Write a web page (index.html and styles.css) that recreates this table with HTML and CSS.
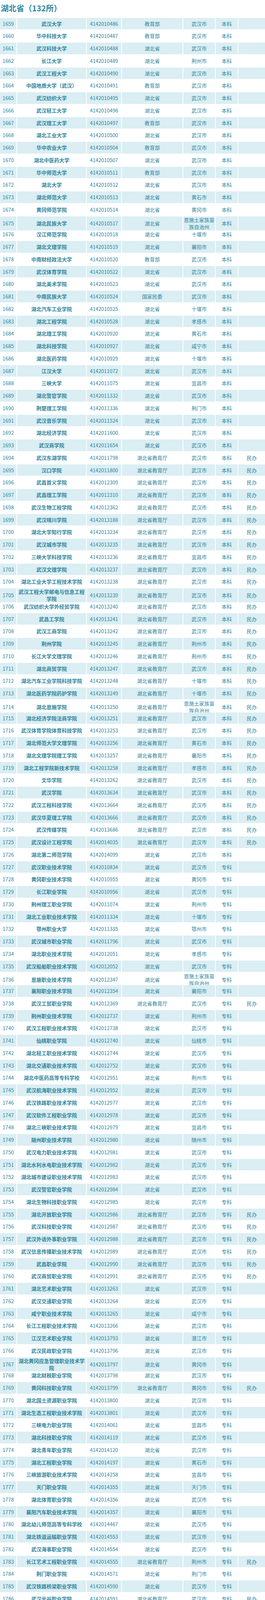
FILE: index.html
```html
<!DOCTYPE html>
<html lang="zh-CN">
<head>
<meta charset="utf-8">
<title>湖北省（132所）</title>
<link rel="stylesheet" href="styles.css">
</head>
<body>
<h1 class="title">湖北省（132所）</h1>
<div class="table">
<div class="row"><span class="c">1659</span><b class="c n">武汉大学</b><span class="c">4142010486</span><span class="c">教育部</span><span class="c">武汉市</span><span class="c">本科</span><span class="c"></span></div>
<div class="row"><span class="c">1660</span><b class="c n">华中科技大学</b><span class="c">4142010487</span><span class="c">教育部</span><span class="c">武汉市</span><span class="c">本科</span><span class="c"></span></div>
<div class="row"><span class="c">1661</span><b class="c n">武汉科技大学</b><span class="c">4142010488</span><span class="c">湖北省</span><span class="c">武汉市</span><span class="c">本科</span><span class="c"></span></div>
<div class="row"><span class="c">1662</span><b class="c n">长江大学</b><span class="c">4142010489</span><span class="c">湖北省</span><span class="c">荆州市</span><span class="c">本科</span><span class="c"></span></div>
<div class="row"><span class="c">1663</span><b class="c n">武汉工程大学</b><span class="c">4142010490</span><span class="c">湖北省</span><span class="c">武汉市</span><span class="c">本科</span><span class="c"></span></div>
<div class="row"><span class="c">1664</span><b class="c n">中国地质大学（武汉）</b><span class="c">4142010491</span><span class="c">教育部</span><span class="c">武汉市</span><span class="c">本科</span><span class="c"></span></div>
<div class="row"><span class="c">1665</span><b class="c n">武汉纺织大学</b><span class="c">4142010495</span><span class="c">湖北省</span><span class="c">武汉市</span><span class="c">本科</span><span class="c"></span></div>
<div class="row"><span class="c">1666</span><b class="c n">武汉轻工大学</b><span class="c">4142010496</span><span class="c">湖北省</span><span class="c">武汉市</span><span class="c">本科</span><span class="c"></span></div>
<div class="row"><span class="c">1667</span><b class="c n">武汉理工大学</b><span class="c">4142010497</span><span class="c">教育部</span><span class="c">武汉市</span><span class="c">本科</span><span class="c"></span></div>
<div class="row"><span class="c">1668</span><b class="c n">湖北工业大学</b><span class="c">4142010500</span><span class="c">湖北省</span><span class="c">武汉市</span><span class="c">本科</span><span class="c"></span></div>
<div class="row"><span class="c">1669</span><b class="c n">华中农业大学</b><span class="c">4142010504</span><span class="c">教育部</span><span class="c">武汉市</span><span class="c">本科</span><span class="c"></span></div>
<div class="row"><span class="c">1670</span><b class="c n">湖北中医药大学</b><span class="c">4142010507</span><span class="c">湖北省</span><span class="c">武汉市</span><span class="c">本科</span><span class="c"></span></div>
<div class="row"><span class="c">1671</span><b class="c n">华中师范大学</b><span class="c">4142010511</span><span class="c">教育部</span><span class="c">武汉市</span><span class="c">本科</span><span class="c"></span></div>
<div class="row"><span class="c">1672</span><b class="c n">湖北大学</b><span class="c">4142010512</span><span class="c">湖北省</span><span class="c">武汉市</span><span class="c">本科</span><span class="c"></span></div>
<div class="row"><span class="c">1673</span><b class="c n">湖北师范大学</b><span class="c">4142010513</span><span class="c">湖北省</span><span class="c">黄石市</span><span class="c">本科</span><span class="c"></span></div>
<div class="row"><span class="c">1674</span><b class="c n">黄冈师范学院</b><span class="c">4142010514</span><span class="c">湖北省</span><span class="c">黄冈市</span><span class="c">本科</span><span class="c"></span></div>
<div class="row"><span class="c">1675</span><b class="c n">湖北民族大学</b><span class="c">4142010517</span><span class="c">湖北省</span><span class="c">恩施土家族苗族自治州</span><span class="c">本科</span><span class="c"></span></div>
<div class="row"><span class="c">1676</span><b class="c n">汉江师范学院</b><span class="c">4142010518</span><span class="c">湖北省</span><span class="c">十堰市</span><span class="c">本科</span><span class="c"></span></div>
<div class="row"><span class="c">1677</span><b class="c n">湖北文理学院</b><span class="c">4142010519</span><span class="c">湖北省</span><span class="c">襄阳市</span><span class="c">本科</span><span class="c"></span></div>
<div class="row"><span class="c">1678</span><b class="c n">中南财经政法大学</b><span class="c">4142010520</span><span class="c">教育部</span><span class="c">武汉市</span><span class="c">本科</span><span class="c"></span></div>
<div class="row"><span class="c">1679</span><b class="c n">武汉体育学院</b><span class="c">4142010522</span><span class="c">湖北省</span><span class="c">武汉市</span><span class="c">本科</span><span class="c"></span></div>
<div class="row"><span class="c">1680</span><b class="c n">湖北美术学院</b><span class="c">4142010523</span><span class="c">湖北省</span><span class="c">武汉市</span><span class="c">本科</span><span class="c"></span></div>
<div class="row"><span class="c">1681</span><b class="c n">中南民族大学</b><span class="c">4142010524</span><span class="c">国家民委</span><span class="c">武汉市</span><span class="c">本科</span><span class="c"></span></div>
<div class="row"><span class="c">1682</span><b class="c n">湖北汽车工业学院</b><span class="c">4142010525</span><span class="c">湖北省</span><span class="c">十堰市</span><span class="c">本科</span><span class="c"></span></div>
<div class="row"><span class="c">1683</span><b class="c n">湖北工程学院</b><span class="c">4142010528</span><span class="c">湖北省</span><span class="c">孝感市</span><span class="c">本科</span><span class="c"></span></div>
<div class="row"><span class="c">1684</span><b class="c n">湖北理工学院</b><span class="c">4142010920</span><span class="c">湖北省</span><span class="c">黄石市</span><span class="c">本科</span><span class="c"></span></div>
<div class="row"><span class="c">1685</span><b class="c n">湖北科技学院</b><span class="c">4142010927</span><span class="c">湖北省</span><span class="c">咸宁市</span><span class="c">本科</span><span class="c"></span></div>
<div class="row"><span class="c">1686</span><b class="c n">湖北医药学院</b><span class="c">4142010929</span><span class="c">湖北省</span><span class="c">十堰市</span><span class="c">本科</span><span class="c"></span></div>
<div class="row"><span class="c">1687</span><b class="c n">江汉大学</b><span class="c">4142011072</span><span class="c">湖北省</span><span class="c">武汉市</span><span class="c">本科</span><span class="c"></span></div>
<div class="row"><span class="c">1688</span><b class="c n">三峡大学</b><span class="c">4142011075</span><span class="c">湖北省</span><span class="c">宜昌市</span><span class="c">本科</span><span class="c"></span></div>
<div class="row"><span class="c">1689</span><b class="c n">湖北警官学院</b><span class="c">4142011332</span><span class="c">湖北省</span><span class="c">武汉市</span><span class="c">本科</span><span class="c"></span></div>
<div class="row"><span class="c">1690</span><b class="c n">荆楚理工学院</b><span class="c">4142011336</span><span class="c">湖北省</span><span class="c">荆门市</span><span class="c">本科</span><span class="c"></span></div>
<div class="row"><span class="c">1691</span><b class="c n">武汉音乐学院</b><span class="c">4142011524</span><span class="c">湖北省</span><span class="c">武汉市</span><span class="c">本科</span><span class="c"></span></div>
<div class="row"><span class="c">1692</span><b class="c n">湖北经济学院</b><span class="c">4142011600</span><span class="c">湖北省</span><span class="c">武汉市</span><span class="c">本科</span><span class="c"></span></div>
<div class="row"><span class="c">1693</span><b class="c n">武汉商学院</b><span class="c">4142011654</span><span class="c">湖北省</span><span class="c">武汉市</span><span class="c">本科</span><span class="c"></span></div>
<div class="row"><span class="c">1694</span><b class="c n">武汉东湖学院</b><span class="c">4142011798</span><span class="c">湖北省教育厅</span><span class="c">武汉市</span><span class="c">本科</span><span class="c">民办</span></div>
<div class="row"><span class="c">1695</span><b class="c n">汉口学院</b><span class="c">4142011800</span><span class="c">湖北省教育厅</span><span class="c">武汉市</span><span class="c">本科</span><span class="c">民办</span></div>
<div class="row"><span class="c">1696</span><b class="c n">武昌首义学院</b><span class="c">4142012309</span><span class="c">湖北省教育厅</span><span class="c">武汉市</span><span class="c">本科</span><span class="c">民办</span></div>
<div class="row"><span class="c">1697</span><b class="c n">武昌理工学院</b><span class="c">4142012310</span><span class="c">湖北省教育厅</span><span class="c">武汉市</span><span class="c">本科</span><span class="c">民办</span></div>
<div class="row"><span class="c">1698</span><b class="c n">武汉生物工程学院</b><span class="c">4142012362</span><span class="c">湖北省教育厅</span><span class="c">武汉市</span><span class="c">本科</span><span class="c">民办</span></div>
<div class="row"><span class="c">1699</span><b class="c n">武汉晴川学院</b><span class="c">4142013188</span><span class="c">湖北省教育厅</span><span class="c">武汉市</span><span class="c">本科</span><span class="c">民办</span></div>
<div class="row"><span class="c">1700</span><b class="c n">湖北大学知行学院</b><span class="c">4142013234</span><span class="c">湖北省教育厅</span><span class="c">武汉市</span><span class="c">本科</span><span class="c">民办</span></div>
<div class="row"><span class="c">1701</span><b class="c n">武汉城市学院</b><span class="c">4142013235</span><span class="c">湖北省教育厅</span><span class="c">武汉市</span><span class="c">本科</span><span class="c">民办</span></div>
<div class="row"><span class="c">1702</span><b class="c n">三峡大学科技学院</b><span class="c">4142013236</span><span class="c">湖北省教育厅</span><span class="c">宜昌市</span><span class="c">本科</span><span class="c">民办</span></div>
<div class="row"><span class="c">1703</span><b class="c n">武汉文理学院</b><span class="c">4142013237</span><span class="c">湖北省教育厅</span><span class="c">武汉市</span><span class="c">本科</span><span class="c">民办</span></div>
<div class="row"><span class="c">1704</span><b class="c n">湖北工业大学工程技术学院</b><span class="c">4142013238</span><span class="c">湖北省教育厅</span><span class="c">武汉市</span><span class="c">本科</span><span class="c">民办</span></div>
<div class="row"><span class="c">1705</span><b class="c n">武汉工程大学邮电与信息工程学院</b><span class="c">4142013239</span><span class="c">湖北省教育厅</span><span class="c">武汉市</span><span class="c">本科</span><span class="c">民办</span></div>
<div class="row"><span class="c">1706</span><b class="c n">武汉纺织大学外经贸学院</b><span class="c">4142013240</span><span class="c">湖北省教育厅</span><span class="c">武汉市</span><span class="c">本科</span><span class="c">民办</span></div>
<div class="row"><span class="c">1707</span><b class="c n">武昌工学院</b><span class="c">4142013241</span><span class="c">湖北省教育厅</span><span class="c">武汉市</span><span class="c">本科</span><span class="c">民办</span></div>
<div class="row"><span class="c">1708</span><b class="c n">武汉工商学院</b><span class="c">4142013242</span><span class="c">湖北省教育厅</span><span class="c">武汉市</span><span class="c">本科</span><span class="c">民办</span></div>
<div class="row"><span class="c">1709</span><b class="c n">荆州学院</b><span class="c">4142013245</span><span class="c">湖北省教育厅</span><span class="c">荆州市</span><span class="c">本科</span><span class="c">民办</span></div>
<div class="row"><span class="c">1710</span><b class="c n">长江大学文理学院</b><span class="c">4142013246</span><span class="c">湖北省教育厅</span><span class="c">荆州市</span><span class="c">本科</span><span class="c">民办</span></div>
<div class="row"><span class="c">1711</span><b class="c n">湖北商贸学院</b><span class="c">4142013247</span><span class="c">湖北省教育厅</span><span class="c">武汉市</span><span class="c">本科</span><span class="c">民办</span></div>
<div class="row"><span class="c">1712</span><b class="c n">湖北汽车工业学院科技学院</b><span class="c">4142013248</span><span class="c">湖北省教育厅</span><span class="c">十堰市</span><span class="c">本科</span><span class="c">民办</span></div>
<div class="row"><span class="c">1713</span><b class="c n">湖北医药学院药护学院</b><span class="c">4142013249</span><span class="c">湖北省教育厅</span><span class="c">十堰市</span><span class="c">本科</span><span class="c">民办</span></div>
<div class="row"><span class="c">1714</span><b class="c n">湖北恩施学院</b><span class="c">4142013250</span><span class="c">湖北省教育厅</span><span class="c">恩施土家族苗族自治州</span><span class="c">本科</span><span class="c">民办</span></div>
<div class="row"><span class="c">1715</span><b class="c n">湖北经济学院法商学院</b><span class="c">4142013251</span><span class="c">湖北省教育厅</span><span class="c">武汉市</span><span class="c">本科</span><span class="c">民办</span></div>
<div class="row"><span class="c">1716</span><b class="c n">武汉体育学院体育科技学院</b><span class="c">4142013253</span><span class="c">湖北省教育厅</span><span class="c">武汉市</span><span class="c">本科</span><span class="c">民办</span></div>
<div class="row"><span class="c">1717</span><b class="c n">湖北师范大学文理学院</b><span class="c">4142013256</span><span class="c">湖北省教育厅</span><span class="c">黄石市</span><span class="c">本科</span><span class="c">民办</span></div>
<div class="row"><span class="c">1718</span><b class="c n">湖北文理学院理工学院</b><span class="c">4142013257</span><span class="c">湖北省教育厅</span><span class="c">襄阳市</span><span class="c">本科</span><span class="c">民办</span></div>
<div class="row"><span class="c">1719</span><b class="c n">湖北工程学院新技术学院</b><span class="c">4142013258</span><span class="c">湖北省教育厅</span><span class="c">孝感市</span><span class="c">本科</span><span class="c">民办</span></div>
<div class="row"><span class="c">1720</span><b class="c n">文华学院</b><span class="c">4142013262</span><span class="c">湖北省教育厅</span><span class="c">武汉市</span><span class="c">本科</span><span class="c">民办</span></div>
<div class="row"><span class="c">1721</span><b class="c n">武汉学院</b><span class="c">4142013634</span><span class="c">湖北省教育厅</span><span class="c">武汉市</span><span class="c">本科</span><span class="c">民办</span></div>
<div class="row"><span class="c">1722</span><b class="c n">武汉工程科技学院</b><span class="c">4142013664</span><span class="c">湖北省教育厅</span><span class="c">武汉市</span><span class="c">本科</span><span class="c">民办</span></div>
<div class="row"><span class="c">1723</span><b class="c n">武汉华夏理工学院</b><span class="c">4142013666</span><span class="c">湖北省教育厅</span><span class="c">武汉市</span><span class="c">本科</span><span class="c">民办</span></div>
<div class="row"><span class="c">1724</span><b class="c n">武汉传媒学院</b><span class="c">4142013686</span><span class="c">湖北省教育厅</span><span class="c">武汉市</span><span class="c">本科</span><span class="c">民办</span></div>
<div class="row"><span class="c">1725</span><b class="c n">武汉设计工程学院</b><span class="c">4142014035</span><span class="c">湖北省教育厅</span><span class="c">武汉市</span><span class="c">本科</span><span class="c">民办</span></div>
<div class="row"><span class="c">1726</span><b class="c n">湖北第二师范学院</b><span class="c">4142014099</span><span class="c">湖北省</span><span class="c">武汉市</span><span class="c">本科</span><span class="c"></span></div>
<div class="row"><span class="c">1727</span><b class="c n">武汉职业技术学院</b><span class="c">4142010834</span><span class="c">湖北省</span><span class="c">武汉市</span><span class="c">专科</span><span class="c"></span></div>
<div class="row"><span class="c">1728</span><b class="c n">黄冈职业技术学院</b><span class="c">4142010955</span><span class="c">湖北省</span><span class="c">黄冈市</span><span class="c">专科</span><span class="c"></span></div>
<div class="row"><span class="c">1729</span><b class="c n">长江职业学院</b><span class="c">4142010956</span><span class="c">湖北省</span><span class="c">武汉市</span><span class="c">专科</span><span class="c"></span></div>
<div class="row"><span class="c">1730</span><b class="c n">荆州理工职业学院</b><span class="c">4142011074</span><span class="c">湖北省</span><span class="c">荆州市</span><span class="c">专科</span><span class="c"></span></div>
<div class="row"><span class="c">1731</span><b class="c n">湖北工业职业技术学院</b><span class="c">4142011334</span><span class="c">湖北省</span><span class="c">十堰市</span><span class="c">专科</span><span class="c"></span></div>
<div class="row"><span class="c">1732</span><b class="c n">鄂州职业大学</b><span class="c">4142011335</span><span class="c">湖北省</span><span class="c">鄂州市</span><span class="c">专科</span><span class="c"></span></div>
<div class="row"><span class="c">1733</span><b class="c n">武汉城市职业学院</b><span class="c">4142011796</span><span class="c">湖北省</span><span class="c">武汉市</span><span class="c">专科</span><span class="c"></span></div>
<div class="row"><span class="c">1734</span><b class="c n">湖北职业技术学院</b><span class="c">4142012051</span><span class="c">湖北省</span><span class="c">孝感市</span><span class="c">专科</span><span class="c"></span></div>
<div class="row"><span class="c">1735</span><b class="c n">武汉船舶职业技术学院</b><span class="c">4142012052</span><span class="c">湖北省</span><span class="c">武汉市</span><span class="c">专科</span><span class="c"></span></div>
<div class="row"><span class="c">1736</span><b class="c n">恩施职业技术学院</b><span class="c">4142012347</span><span class="c">湖北省</span><span class="c">恩施土家族苗族自治州</span><span class="c">专科</span><span class="c"></span></div>
<div class="row"><span class="c">1737</span><b class="c n">襄阳职业技术学院</b><span class="c">4142012354</span><span class="c">湖北省</span><span class="c">襄阳市</span><span class="c">专科</span><span class="c"></span></div>
<div class="row"><span class="c">1738</span><b class="c n">武汉工贸职业学院</b><span class="c">4142012369</span><span class="c">湖北省教育厅</span><span class="c">武汉市</span><span class="c">专科</span><span class="c">民办</span></div>
<div class="row"><span class="c">1739</span><b class="c n">荆州职业技术学院</b><span class="c">4142012737</span><span class="c">湖北省</span><span class="c">荆州市</span><span class="c">专科</span><span class="c"></span></div>
<div class="row"><span class="c">1740</span><b class="c n">武汉工程职业技术学院</b><span class="c">4142012738</span><span class="c">湖北省</span><span class="c">武汉市</span><span class="c">专科</span><span class="c"></span></div>
<div class="row"><span class="c">1741</span><b class="c n">仙桃职业学院</b><span class="c">4142012740</span><span class="c">湖北省</span><span class="c">仙桃市</span><span class="c">专科</span><span class="c"></span></div>
<div class="row"><span class="c">1742</span><b class="c n">湖北轻工职业技术学院</b><span class="c">4142012744</span><span class="c">湖北省</span><span class="c">武汉市</span><span class="c">专科</span><span class="c"></span></div>
<div class="row"><span class="c">1743</span><b class="c n">湖北交通职业技术学院</b><span class="c">4142012752</span><span class="c">湖北省</span><span class="c">武汉市</span><span class="c">专科</span><span class="c"></span></div>
<div class="row"><span class="c">1744</span><b class="c n">湖北中医药高等专科学校</b><span class="c">4142012951</span><span class="c">湖北省</span><span class="c">荆州市</span><span class="c">专科</span><span class="c"></span></div>
<div class="row"><span class="c">1745</span><b class="c n">武汉航海职业技术学院</b><span class="c">4142012952</span><span class="c">湖北省</span><span class="c">武汉市</span><span class="c">专科</span><span class="c"></span></div>
<div class="row"><span class="c">1746</span><b class="c n">武汉铁路职业技术学院</b><span class="c">4142012977</span><span class="c">湖北省</span><span class="c">武汉市</span><span class="c">专科</span><span class="c"></span></div>
<div class="row"><span class="c">1747</span><b class="c n">武汉软件工程职业学院</b><span class="c">4142012978</span><span class="c">湖北省</span><span class="c">武汉市</span><span class="c">专科</span><span class="c"></span></div>
<div class="row"><span class="c">1748</span><b class="c n">湖北三峡职业技术学院</b><span class="c">4142012979</span><span class="c">湖北省</span><span class="c">宜昌市</span><span class="c">专科</span><span class="c"></span></div>
<div class="row"><span class="c">1749</span><b class="c n">随州职业技术学院</b><span class="c">4142012980</span><span class="c">湖北省</span><span class="c">随州市</span><span class="c">专科</span><span class="c"></span></div>
<div class="row"><span class="c">1750</span><b class="c n">武汉电力职业技术学院</b><span class="c">4142012981</span><span class="c">湖北省</span><span class="c">武汉市</span><span class="c">专科</span><span class="c"></span></div>
<div class="row"><span class="c">1751</span><b class="c n">湖北水利水电职业技术学院</b><span class="c">4142012982</span><span class="c">湖北省</span><span class="c">武汉市</span><span class="c">专科</span><span class="c"></span></div>
<div class="row"><span class="c">1752</span><b class="c n">湖北城市建设职业技术学院</b><span class="c">4142012983</span><span class="c">湖北省</span><span class="c">武汉市</span><span class="c">专科</span><span class="c"></span></div>
<div class="row"><span class="c">1753</span><b class="c n">武汉警官职业学院</b><span class="c">4142012984</span><span class="c">湖北省</span><span class="c">武汉市</span><span class="c">专科</span><span class="c"></span></div>
<div class="row"><span class="c">1754</span><b class="c n">湖北生物科技职业学院</b><span class="c">4142012985</span><span class="c">湖北省</span><span class="c">武汉市</span><span class="c">专科</span><span class="c"></span></div>
<div class="row"><span class="c">1755</span><b class="c n">湖北开放职业学院</b><span class="c">4142012986</span><span class="c">湖北省教育厅</span><span class="c">武汉市</span><span class="c">专科</span><span class="c">民办</span></div>
<div class="row"><span class="c">1756</span><b class="c n">武汉科技职业学院</b><span class="c">4142012987</span><span class="c">湖北省教育厅</span><span class="c">武汉市</span><span class="c">专科</span><span class="c">民办</span></div>
<div class="row"><span class="c">1757</span><b class="c n">武汉外语外事职业学院</b><span class="c">4142012988</span><span class="c">湖北省教育厅</span><span class="c">武汉市</span><span class="c">专科</span><span class="c">民办</span></div>
<div class="row"><span class="c">1758</span><b class="c n">武汉信息传播职业技术学院</b><span class="c">4142012989</span><span class="c">湖北省教育厅</span><span class="c">武汉市</span><span class="c">专科</span><span class="c">民办</span></div>
<div class="row"><span class="c">1759</span><b class="c n">武昌职业学院</b><span class="c">4142012990</span><span class="c">湖北省教育厅</span><span class="c">武汉市</span><span class="c">专科</span><span class="c">民办</span></div>
<div class="row"><span class="c">1760</span><b class="c n">武汉商贸职业学院</b><span class="c">4142012991</span><span class="c">湖北省教育厅</span><span class="c">武汉市</span><span class="c">专科</span><span class="c">民办</span></div>
<div class="row"><span class="c">1761</span><b class="c n">湖北艺术职业学院</b><span class="c">4142013263</span><span class="c">湖北省</span><span class="c">武汉市</span><span class="c">专科</span><span class="c"></span></div>
<div class="row"><span class="c">1762</span><b class="c n">武汉交通职业学院</b><span class="c">4142013264</span><span class="c">湖北省</span><span class="c">武汉市</span><span class="c">专科</span><span class="c"></span></div>
<div class="row"><span class="c">1763</span><b class="c n">咸宁职业技术学院</b><span class="c">4142013265</span><span class="c">湖北省</span><span class="c">咸宁市</span><span class="c">专科</span><span class="c"></span></div>
<div class="row"><span class="c">1764</span><b class="c n">长江工程职业技术学院</b><span class="c">4142013266</span><span class="c">湖北省</span><span class="c">武汉市</span><span class="c">专科</span><span class="c"></span></div>
<div class="row"><span class="c">1765</span><b class="c n">江汉艺术职业学院</b><span class="c">4142013793</span><span class="c">湖北省</span><span class="c">潜江市</span><span class="c">专科</span><span class="c"></span></div>
<div class="row"><span class="c">1766</span><b class="c n">武汉民政职业学院</b><span class="c">4142013796</span><span class="c">湖北省</span><span class="c">武汉市</span><span class="c">专科</span><span class="c"></span></div>
<div class="row"><span class="c">1767</span><b class="c n">湖北黄冈应急管理职业技术学院</b><span class="c">4142013797</span><span class="c">湖北省</span><span class="c">黄冈市</span><span class="c">专科</span><span class="c"></span></div>
<div class="row"><span class="c">1768</span><b class="c n">湖北财税职业学院</b><span class="c">4142013798</span><span class="c">湖北省</span><span class="c">武汉市</span><span class="c">专科</span><span class="c"></span></div>
<div class="row"><span class="c">1769</span><b class="c n">黄冈科技职业学院</b><span class="c">4142013799</span><span class="c">湖北省教育厅</span><span class="c">黄冈市</span><span class="c">专科</span><span class="c">民办</span></div>
<div class="row"><span class="c">1770</span><b class="c n">湖北国土资源职业学院</b><span class="c">4142013800</span><span class="c">湖北省</span><span class="c">武汉市</span><span class="c">专科</span><span class="c"></span></div>
<div class="row"><span class="c">1771</span><b class="c n">湖北生态工程职业技术学院</b><span class="c">4142013801</span><span class="c">湖北省</span><span class="c">武汉市</span><span class="c">专科</span><span class="c"></span></div>
<div class="row"><span class="c">1772</span><b class="c n">三峡电力职业学院</b><span class="c">4142014061</span><span class="c">湖北省</span><span class="c">宜昌市</span><span class="c">专科</span><span class="c"></span></div>
<div class="row"><span class="c">1773</span><b class="c n">湖北科技职业学院</b><span class="c">4142014119</span><span class="c">湖北省</span><span class="c">武汉市</span><span class="c">专科</span><span class="c"></span></div>
<div class="row"><span class="c">1774</span><b class="c n">湖北青年职业学院</b><span class="c">4142014120</span><span class="c">湖北省</span><span class="c">武汉市</span><span class="c">专科</span><span class="c"></span></div>
<div class="row"><span class="c">1775</span><b class="c n">湖北工程职业学院</b><span class="c">4142014197</span><span class="c">湖北省</span><span class="c">黄石市</span><span class="c">专科</span><span class="c"></span></div>
<div class="row"><span class="c">1776</span><b class="c n">三峡旅游职业技术学院</b><span class="c">4142014258</span><span class="c">湖北省</span><span class="c">宜昌市</span><span class="c">专科</span><span class="c"></span></div>
<div class="row"><span class="c">1777</span><b class="c n">天门职业学院</b><span class="c">4142014355</span><span class="c">湖北省</span><span class="c">天门市</span><span class="c">专科</span><span class="c"></span></div>
<div class="row"><span class="c">1778</span><b class="c n">湖北体育职业学院</b><span class="c">4142014356</span><span class="c">湖北省</span><span class="c">武汉市</span><span class="c">专科</span><span class="c"></span></div>
<div class="row"><span class="c">1779</span><b class="c n">襄阳汽车职业技术学院</b><span class="c">4142014357</span><span class="c">湖北省</span><span class="c">襄阳市</span><span class="c">专科</span><span class="c"></span></div>
<div class="row"><span class="c">1780</span><b class="c n">湖北幼儿师范高等专科学校</b><span class="c">4142014467</span><span class="c">湖北省</span><span class="c">武汉市</span><span class="c">专科</span><span class="c"></span></div>
<div class="row"><span class="c">1781</span><b class="c n">湖北铁道运输职业学院</b><span class="c">4142014553</span><span class="c">湖北省</span><span class="c">武汉市</span><span class="c">专科</span><span class="c"></span></div>
<div class="row"><span class="c">1782</span><b class="c n">武汉海事职业学院</b><span class="c">4142014554</span><span class="c">湖北省</span><span class="c">武汉市</span><span class="c">专科</span><span class="c"></span></div>
<div class="row"><span class="c">1783</span><b class="c n">长江艺术工程职业学院</b><span class="c">4142014555</span><span class="c">湖北省教育厅</span><span class="c">荆州市</span><span class="c">专科</span><span class="c">民办</span></div>
<div class="row"><span class="c">1784</span><b class="c n">荆门职业学院</b><span class="c">4142014571</span><span class="c">湖北省</span><span class="c">荆门市</span><span class="c">专科</span><span class="c"></span></div>
<div class="row"><span class="c">1785</span><b class="c n">武汉铁路桥梁职业学院</b><span class="c">4142014590</span><span class="c">湖北省</span><span class="c">武汉市</span><span class="c">专科</span><span class="c"></span></div>
<div class="row"><span class="c">1786</span><b class="c n">武汉光谷职业学院</b><span class="c">4142014591</span><span class="c">湖北省教育厅</span><span class="c">武汉市</span><span class="c">专科</span><span class="c">民办</span></div>
<div class="row"><span class="c">1787</span><b class="c n">湖北健康职业学院</b><span class="c">4142014721</span><span class="c">湖北省教育厅</span><span class="c">咸宁市</span><span class="c">专科</span><span class="c">民办</span></div>
<div class="row"><span class="c">1788</span><b class="c n">湖北孝感美珈职业学院</b><span class="c">4142014755</span><span class="c">湖北省教育厅</span><span class="c">孝感市</span><span class="c">专科</span><span class="c">民办</span></div>
<div class="row"><span class="c">1789</span><b class="c n">襄阳科技职业学院</b><span class="c">4142014832</span><span class="c">湖北省</span><span class="c">襄阳市</span><span class="c">专科</span><span class="c"></span></div>
<div class="row"><span class="c">1790</span><b class="c n">宜昌科技职业学院</b><span class="c">4142014833</span><span class="c">湖北省</span><span class="c">宜昌市</span><span class="c">专科</span><span class="c"></span></div>
</div>
</body>
</html>
```
FILE: styles.css
```css
html, body {
  margin: 0;
  padding: 0;
  background: #ffffff;
}

body {
  font-family: "Noto Sans CJK SC", "Noto Sans", sans-serif;
  color: #31859c;
  width: 678px;
}

.title {
  margin: 0;
  padding: 6px 0 0 2px;
  font-size: 20px;
  line-height: 30px;
  font-weight: 700;
  color: #31859c;
}

.table {
  margin-top: 9.7px;
}

.row {
  display: grid;
  grid-template-columns: 42px 176px 88px 155px 81px 56px 1fr;
  column-gap: 2px;
  height: 29.75px;
  margin-top: 2px;
}

.c {
  display: flex;
  align-items: center;
  justify-content: center;
  text-align: center;
  font-size: 13px;
  line-height: 18px;
  font-weight: 400;
  color: #31859c;
  min-width: 0;
}

.c.n {
  font-weight: 700;
}

.row:nth-child(odd) .c {
  background: #daeef3;
}
```
